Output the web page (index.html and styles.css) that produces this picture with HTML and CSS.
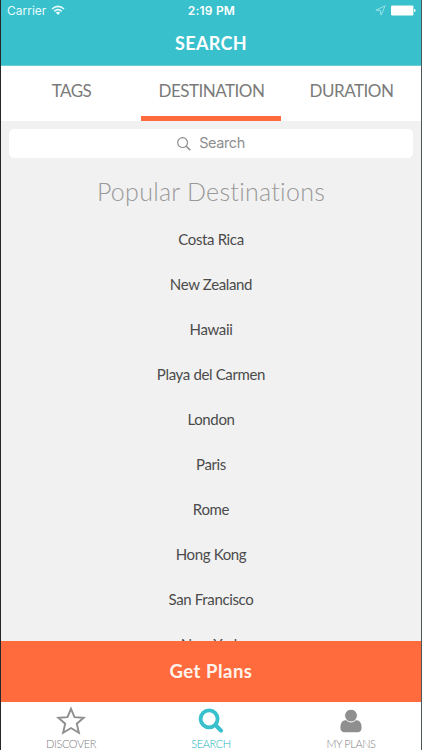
FILE: index.html
```html
<!DOCTYPE html>
<html lang="en">
<head>
<meta charset="utf-8">
<title>Search</title>
<link rel="stylesheet" href="styles.css">
</head>
<body>
<div class="app">
  <header class="header">
    <div class="status">
      <div class="status-left">
        <span class="carrier">Carrier</span>
        <svg class="wifi" width="14" height="11" viewBox="0 0 14 11" fill="none" stroke="#e8fbfd" stroke-width="1.6"><path d="M1 4Q7-1.2 13 4M3.2 6.3Q7 3 10.8 6.3"/><path d="M4.7 7.6Q7 6 9.3 7.6L7 10Z" fill="#e8fbfd" stroke="none"/></svg>
      </div>
      <span class="time">2:19 PM</span>
      <div class="status-right">
        <svg width="11" height="11" viewBox="0 0 11 11" fill="none" stroke="#a5e3e9" stroke-width=".9"><path d="M.8 5.2 10.2.8 6 10.1 5.2 5.4Z"/></svg>
        <svg width="25" height="11" viewBox="0 0 25 11" fill="#fff"><rect x="0" y="0.4" width="22.4" height="10" rx="1.2"/><path d="M23.2 3.7q1.4.2 1.4 1.7t-1.4 1.7z"/></svg>
      </div>
    </div>
    <h1 class="title">SEARCH</h1>
  </header>
  <nav class="tabs">
    <span class="tab">TAGS</span>
    <span class="tab active">DESTINATION</span>
    <span class="tab">DURATION</span>
  </nav>
  <main class="content">
    <div class="search">
      <svg width="14" height="14" viewBox="0 0 14 14" fill="none" stroke="#8e8e90" stroke-width="1.2"><circle cx="5.6" cy="5.6" r="4.9"/><path d="M9.2 9.2 13.3 13.3" stroke-width="1.6"/></svg>
      <span>Search</span>
    </div>
    <h2 class="heading">Popular Destinations</h2>
    <ul class="list">
      <li>Costa Rica</li>
      <li>New Zealand</li>
      <li>Hawaii</li>
      <li>Playa del Carmen</li>
      <li>London</li>
      <li>Paris</li>
      <li>Rome</li>
      <li>Hong Kong</li>
      <li>San Francisco</li>
      <li>New York</li>
    </ul>
  </main>
  <div class="cta">Get Plans</div>
  <footer class="bar">
    <div class="item">
      <svg width="30" height="30" viewBox="0 0 30 30" fill="none" stroke="#8f8f8f" stroke-width="1.9"><path d="M15 2.8 18.5 11.1 27.7 11.8 20.8 17.7 22.9 26.8 15 22 7.1 26.8 9.2 17.7 2.3 11.8 11.5 11.1Z"/></svg>
      <span>DISCOVER</span>
    </div>
    <div class="item selected">
      <svg width="30" height="30" viewBox="0 0 30 30" fill="none" stroke="#38c0cc" stroke-width="3.8"><circle cx="13.1" cy="12.8" r="8.5"/><path d="M19.5 19 25 24.6" stroke-width="4.2" stroke-linecap="round"/></svg>
      <span>SEARCH</span>
    </div>
    <div class="item">
      <svg width="30" height="30" viewBox="0 0 30 30" fill="#8f8f8f"><path d="M8.9 14.2H21.1Q25.6 15 25.6 21.8 25.6 26.2 21.5 26.2H8.5Q4.4 26.2 4.4 21.8 4.4 15 8.9 14.2Z"/><circle cx="15" cy="9.6" r="6.4" stroke="#fff" stroke-width="1"/></svg>
      <span>MY PLANS</span>
    </div>
  </footer>
</div>
</body>
</html>
```
FILE: styles.css
```css
* { box-sizing: border-box; }
body { margin: 0; font-family: Lato, sans-serif; font-variant-ligatures: none; }
.app {
  width: 422px;
  height: 750px;
  display: flex;
  flex-direction: column;
  overflow: hidden;
  background: #f1f1f1;
  border-left: 1px solid #25282a;
  border-right: 1px solid #4d5658;
}
.header { height: 66px; flex: none; background: #38c0cc; color: #fff; border-bottom: 1px solid #6ccbd3; }
.status {
  height: 21px;
  display: grid;
  grid-template-columns: 1fr auto 1fr;
  align-items: center;
  padding: 0 5px 0 6px;
  font-family: Inter, sans-serif;
  font-size: 12px;
}
.status-left, .status-right { display: flex; align-items: center; gap: 5px; }
.status-right { justify-content: flex-end; }
.carrier { color: #e8fbfd; }
.time { font-weight: 600; letter-spacing: .2px; }
.title { margin: 0; text-align: center; font-size: 18px; line-height: 44px; font-weight: 700; letter-spacing: .35px; }
.tabs { height: 55px; flex: none; display: flex; background: #fff; }
.tab {
  flex: 1;
  text-align: center;
  padding: 1px 0 0 1px;
  font-size: 17px;
  line-height: 48px;
  letter-spacing: -.5px;
  color: #7a7a7a;
  border-bottom: 5px solid transparent;
  white-space: nowrap;
}
.active { border-color: #ff6b3d; }
.content { flex: 1; min-height: 0; overflow: hidden; padding: 8px 8px 0; }
.search {
  height: 29px;
  display: flex;
  align-items: center;
  justify-content: center;
  gap: 8px;
  border-radius: 5px;
  background: #fff;
  color: #8e8e90;
  font-family: Inter, sans-serif;
  font-size: 14.5px;
  line-height: 27px;
  letter-spacing: -.4px;
}
.search span { padding-bottom: 2px; }
.heading { margin: 12px 0 0; height: 47px; line-height: 42px; text-align: center; font-size: 25px; letter-spacing: .28px; font-weight: 300; color: #999; white-space: nowrap; }
.list { margin: 0; padding: 0; list-style: none; text-align: center; font-size: 15px; letter-spacing: -.35px; color: #4b4b4b; }
.list li { height: 45px; line-height: 45px; }
.cta { height: 61px; flex: none; background: #ff6b3d; color: #fff3ec; text-align: center; line-height: 61px; font-size: 18.5px; font-weight: 700; letter-spacing: .5px; }
.bar { height: 48px; flex: none; display: flex; background: #fff; color: #808080; }
.item { flex: 1; display: flex; flex-direction: column; align-items: center; padding-top: 4px; font-size: 11px; line-height: 16px; font-weight: 300; letter-spacing: -.4px; }
.item svg { flex: none; }
.selected { color: #20b4c1; }
```
